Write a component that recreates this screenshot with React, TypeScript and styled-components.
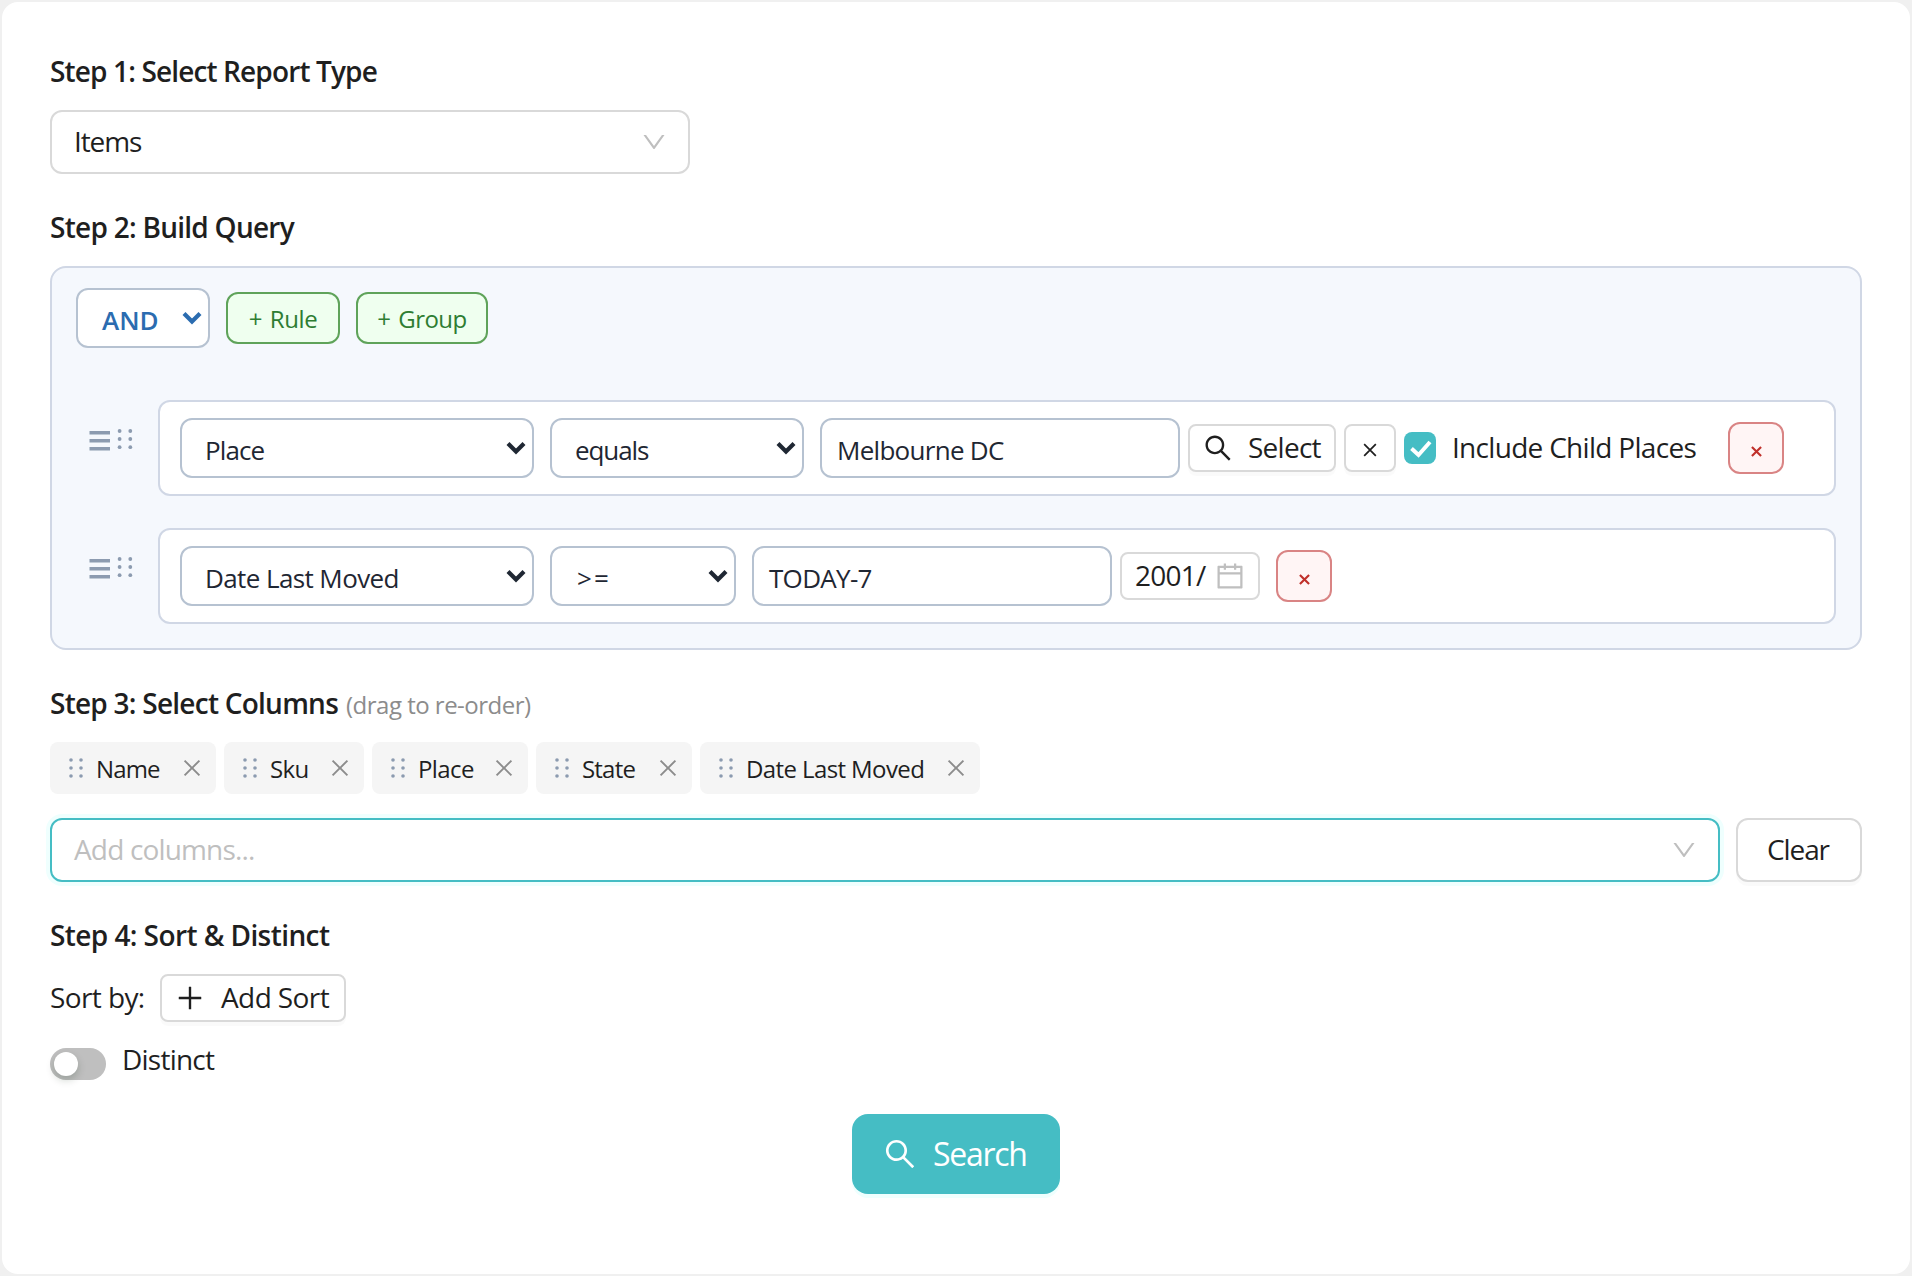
import React from 'react';
import styled, { createGlobalStyle, css } from 'styled-components';
import { AiOutlineCalendar, AiOutlineClose, AiOutlineDown, AiOutlinePlus, AiOutlineSearch } from 'react-icons/ai';

const GlobalStyle = createGlobalStyle`
  * { box-sizing: border-box; }
  body {
    margin: 0;
    background: #f0f0f0;
    color: #1f1f1f;
    font: 400 28px/44px 'Open Sans', 'Noto Sans', sans-serif;
  }
  svg { display: block; flex: none; }
`;

const Page = styled.div`
  height: 1276px;
  padding: 2px;
`;

const Card = styled.main`
  display: flex;
  flex-direction: column;
  gap: 32px;
  height: 1272px;
  padding: 48px;
  border-radius: 16px;
  background: #fff;
`;

const Step = styled.section`
  display: flex;
  flex-direction: column;
  gap: 16px;
`;

/* Text run with its own tracking; $nudge shifts the baseline. */
const Label = styled.span<{ $track?: number; $nudge?: number; $word?: number }>`
  display: block;
  white-space: pre;
  letter-spacing: ${(p) => p.$track ?? 0}px;
  word-spacing: ${(p) => p.$word ?? 0}px;
  margin-top: ${(p) => (p.$nudge ?? 0) * 2}px;
`;

const StepTitle = styled.h2<{ $track: number }>`
  display: flex;
  align-items: baseline;
  gap: 8px;
  height: 44px;
  margin: 0;
  font-size: 28px;
  line-height: 42px;
  font-weight: 600;
  white-space: pre;
  letter-spacing: ${(p) => p.$track}px;
`;

const Hint = styled.small`
  font-size: 24px;
  font-weight: 400;
  letter-spacing: -0.51px;
  color: #8c8c8c;
`;

const SelectBox = styled.div<{ $width?: number; $active?: boolean }>`
  display: flex;
  align-items: center;
  justify-content: space-between;
  height: 64px;
  width: ${(p) => (p.$width ? `${p.$width}px` : 'auto')};
  flex: ${(p) => (p.$width ? 'none' : '1')};
  padding: 0 20px 0 22px;
  border: 2px solid ${(p) => (p.$active ? '#45bdc4' : '#d9d9d9')};
  border-radius: 12px;
  background: #fff;
  ${(p) => p.$active && css`box-shadow: 0 0 0 4px #effffe;`}
  > svg { color: #bfbfbf; }
`;

const Placeholder = styled(Label)`
  color: #bfbfbf;
`;

const QueryPanel = styled.div`
  display: flex;
  flex-direction: column;
  height: 384px;
  padding: 20px 24px 24px;
  border: 2px solid #d0d7e5;
  border-radius: 16px;
  background: #f5f8fd;
`;

const GroupHeader = styled.div`
  display: flex;
  align-items: center;
  gap: 16px;
  height: 60px;
`;

const NativeSelect = styled.div<{ $width: number; $accent?: boolean; $indent?: number }>`
  display: flex;
  align-items: center;
  justify-content: space-between;
  width: ${(p) => p.$width}px;
  height: 60px;
  padding: 0 6px 0 ${(p) => p.$indent ?? 23}px;
  border: 2px solid #b6c2d1;
  border-radius: 12px;
  background: #fff;
  font-size: 26px;
  color: ${(p) => (p.$accent ? '#2b6cb0' : '#1f2733')};
  font-weight: ${(p) => (p.$accent ? 600 : 400)};
`;

const TextField = styled.div`
  display: flex;
  align-items: center;
  width: 360px;
  height: 60px;
  padding: 0 15px;
  border: 2px solid #b6c2d1;
  border-radius: 12px;
  background: #fff;
  font-size: 26px;
  color: #1f2733;
`;

const AddButton = styled.button<{ $width: number }>`
  display: flex;
  align-items: center;
  justify-content: center;
  width: ${(p) => p.$width}px;
  height: 52px;
  padding: 0;
  border: 2px solid #5fa35a;
  border-radius: 12px;
  background: #efffef;
  color: #2e7d32;
  font: 400 24px/44px 'Open Sans', sans-serif;
`;

const Rules = styled.div`
  display: flex;
  flex-direction: column;
  gap: 32px;
  margin-top: 52px;
`;

const RuleRow = styled.div`
  display: flex;
  gap: 24px;
  height: 96px;
`;

const Handle = styled.div`
  display: flex;
  align-items: flex-start;
  width: 58px;
  padding: 29px 0 0 13px;
  color: #8c9bb0;
`;

const RuleBody = styled.div`
  display: flex;
  align-items: center;
  flex: 1;
  padding: 0 20px;
  border: 2px solid #d0d7e5;
  border-radius: 12px;
  background: #fff;
`;

const Fields = styled.div`
  display: flex;
  align-items: center;
  gap: 16px;
`;

const Extras = styled.div`
  display: flex;
  align-items: center;
  gap: 8px;
  margin-left: 8px;
`;

const SmallButton = styled.button<{ $width: number; $gap?: number }>`
  display: flex;
  align-items: center;
  gap: ${(p) => p.$gap ?? 0}px;
  width: ${(p) => p.$width}px;
  height: 48px;
  padding: 0 0 0 12px;
  border: 2px solid #d9d9d9;
  border-radius: 8px;
  background: #fff;
  box-shadow: 0 4px 0 rgba(0, 0, 0, 0.02);
  color: #1f1f1f;
  font: inherit;
`;

const ClearPlace = styled(SmallButton)`
  justify-content: center;
  padding: 3px 0 0;
`;

const CheckLabel = styled.label`
  display: flex;
  align-items: center;
  gap: 16px;
`;

const CheckMark = styled.span`
  display: flex;
  align-items: center;
  justify-content: center;
  width: 32px;
  height: 32px;
  padding: 2px 0 0 1px;
  border-radius: 8px;
  background: #45bdc4;
`;

const RemoveButton = styled.button<{ $offset: number }>`
  display: flex;
  align-items: center;
  justify-content: center;
  width: 56px;
  height: 52px;
  margin-left: ${(p) => p.$offset}px;
  padding: 6px 0 0 1px;
  border: 2px solid #d98484;
  border-radius: 12px;
  background: #fff5f5;
  color: #c0302a;
`;

const DateField = styled.div`
  display: flex;
  align-items: center;
  justify-content: space-between;
  width: 140px;
  height: 48px;
  padding: 0 12px 0 13px;
  border: 2px solid #d9d9d9;
  border-radius: 8px;
  > svg { color: #bfbfbf; }
`;

const Tags = styled.div`
  display: flex;
  gap: 8px;
`;

const Tag = styled.div<{ $width: number }>`
  display: flex;
  align-items: center;
  justify-content: space-between;
  width: ${(p) => p.$width}px;
  height: 52px;
  padding: 0 12px 0 19px;
  border-radius: 8px;
  background: #f5f5f5;
  font-size: 24px;
  > svg { color: #8c8c8c; margin-bottom: 1px; }
`;

const TagName = styled.div`
  display: flex;
  align-items: center;
  gap: 11px;
  > svg { color: #8c9bb0; }
`;

const ColumnPicker = styled.div`
  display: flex;
  gap: 16px;
  margin-top: 8px;
`;

const ClearButton = styled.button`
  display: flex;
  align-items: center;
  justify-content: center;
  width: 126px;
  height: 64px;
  padding: 0 2px 0 0;
  border: 2px solid #d9d9d9;
  border-radius: 12px;
  background: #fff;
  box-shadow: 0 4px 0 rgba(0, 0, 0, 0.02);
  color: #1f1f1f;
  font: inherit;
`;

const SortRow = styled.div`
  display: flex;
  align-items: center;
  height: 48px;
  > span { width: 110px; }
`;

const DistinctRow = styled.div`
  display: flex;
  align-items: flex-start;
  gap: 16px;
  height: 44px;
`;

const Switch = styled.span`
  width: 56px;
  height: 32px;
  margin-top: 10px;
  padding: 4px;
  border-radius: 16px;
  background: #bfbfbf;
  &::before {
    content: '';
    display: block;
    width: 24px;
    height: 24px;
    border-radius: 50%;
    background: #fff;
    box-shadow: 0 4px 8px rgba(0, 35, 11, 0.2);
  }
`;

const SearchButton = styled.button`
  display: flex;
  align-items: center;
  align-self: center;
  gap: 15px;
  width: 208px;
  height: 80px;
  padding: 0 0 0 30px;
  border: 0;
  border-radius: 16px;
  background: #45bdc4;
  box-shadow: 0 4px 0 #effffe;
  color: #fff;
  font: 400 32px/44px 'Open Sans', sans-serif;
`;

const Chevron = () => (
  <svg width="20" height="14" viewBox="0 0 20 14" fill="none" stroke="currentColor" strokeWidth="4.2">
    <path d="M2 2.5 10 10.5 18 2.5" />
  </svg>
);

const Cross = ({ size, weight }: { size: number; weight: number }) => (
  <svg width={size} height={size} viewBox="0 0 12 12" stroke="currentColor" strokeWidth={weight}>
    <path d="M1 1 11 11M11 1 1 11" />
  </svg>
);

const Dots = () => (
  <svg width="16" height="22" viewBox="0 0 16 22" fill="currentColor">
    {[3, 11, 19].map((y) => [2, 12].map((x) => <circle key={`${x}-${y}`} cx={x} cy={y} r="1.8" />))}
  </svg>
);

const RuleHandle = () => (
  <Handle>
    <svg width="46" height="24" viewBox="0 0 46 24" fill="currentColor">
      <path d="M0.5 2h20.5v3.6H0.5zM0.5 10h20.5v3.6H0.5zM0.5 18h20.5v3.6H0.5z" />
      {[2, 10, 18.2].map((y) => [30.6, 41.3].map((x) => <circle key={`${x}-${y}`} cx={x} cy={y} r="1.9" />))}
    </svg>
  </Handle>
);

const columns = [
  { name: 'Name', width: 166, track: -0.88 },
  { name: 'Sku', width: 140, track: -0.6 },
  { name: 'Place', width: 156, track: -0.58 },
  { name: 'State', width: 156, track: -0.8 },
  { name: 'Date Last Moved', width: 280, track: -0.6 },
];

export default function App() {
  return (
    <Page>
      <GlobalStyle />
      <Card>
        <Step>
          <StepTitle $track={-0.86}>Step 1: Select Report Type</StepTitle>
          <SelectBox $width={640}>
            <Label $track={-1.1} $nudge={-1}>Items</Label>
            <AiOutlineDown size={28} />
          </SelectBox>
        </Step>

        <Step>
          <StepTitle $track={-0.73}>Step 2: Build Query</StepTitle>
          <QueryPanel>
            <GroupHeader>
              <NativeSelect $width={134} $indent={24} $accent>
                <Label $nudge={2}>AND</Label>
                <Chevron />
              </NativeSelect>
              <AddButton $width={114}><Label $track={-0.4} $word={2} $nudge={1}>+ Rule</Label></AddButton>
              <AddButton $width={132}><Label $track={-0.5} $word={2} $nudge={1}>+ Group</Label></AddButton>
            </GroupHeader>
            <Rules>
              <RuleRow>
                <RuleHandle />
                <RuleBody>
                  <Fields>
                    <NativeSelect $width={354}><Label $track={-0.9} $nudge={2}>Place</Label><Chevron /></NativeSelect>
                    <NativeSelect $width={254}><Label $track={-1.1} $nudge={2}>equals</Label><Chevron /></NativeSelect>
                    <TextField><Label $track={-0.71} $nudge={2}>Melbourne DC</Label></TextField>
                  </Fields>
                  <Extras>
                    <SmallButton $width={148} $gap={14}>
                      <AiOutlineSearch size={32} />
                      <Label $track={-0.74} $nudge={-1}>Select</Label>
                    </SmallButton>
                    <ClearPlace $width={52}><Cross size={14} weight={1.5} /></ClearPlace>
                    <CheckLabel>
                      <CheckMark>
                        <svg width="22" height="18" viewBox="0 0 22 18" fill="none" stroke="#fff" strokeWidth="4">
                          <path d="M1.5 8.5 8.5 15 20 2" />
                        </svg>
                      </CheckMark>
                      <Label $track={-0.7} $nudge={-1}>Include Child Places</Label>
                    </CheckLabel>
                  </Extras>
                  <RemoveButton $offset={31.5}><Cross size={11} weight={2.3} /></RemoveButton>
                </RuleBody>
              </RuleRow>
              <RuleRow>
                <RuleHandle />
                <RuleBody>
                  <Fields>
                    <NativeSelect $width={354}><Label $track={-0.6} $nudge={2}>Date Last Moved</Label><Chevron /></NativeSelect>
                    <NativeSelect $width={186} $indent={25}><Label $track={2.1} $nudge={2}>&gt;=</Label><Chevron /></NativeSelect>
                    <TextField><Label $track={-0.7} $nudge={2}>TODAY-7</Label></TextField>
                  </Fields>
                  <Extras>
                    <DateField>
                      <Label $track={-0.76} $nudge={-1}>2001/</Label>
                      <AiOutlineCalendar size={32} />
                    </DateField>
                  </Extras>
                  <RemoveButton $offset={16}><Cross size={11} weight={2.3} /></RemoveButton>
                </RuleBody>
              </RuleRow>
            </Rules>
          </QueryPanel>
        </Step>

        <Step>
          <StepTitle $track={-0.75}>
            Step 3: Select Columns<Hint>(drag to re-order)</Hint>
          </StepTitle>
          <Tags>
            {columns.map((c) => (
              <Tag key={c.name} $width={c.width}>
                <TagName>
                  <Dots />
                  <Label $track={c.track} $nudge={1}>{c.name}</Label>
                </TagName>
                <AiOutlineClose size={24} />
              </Tag>
            ))}
          </Tags>
          <ColumnPicker>
            <SelectBox $active>
              <Placeholder $track={-0.84} $nudge={-1}>Add columns...</Placeholder>
              <AiOutlineDown size={28} />
            </SelectBox>
            <ClearButton><Label $track={-1.1} $nudge={-1}>Clear</Label></ClearButton>
          </ColumnPicker>
        </Step>

        <Step>
          <StepTitle $track={-0.58}>Step 4: Sort &amp; Distinct</StepTitle>
          <SortRow>
            <Label $track={-0.6} $nudge={-1}>Sort by:</Label>
            <SmallButton $width={186} $gap={15}>
              <AiOutlinePlus size={32} />
              <Label $track={-0.6} $nudge={-1}>Add Sort</Label>
            </SmallButton>
          </SortRow>
          <DistinctRow>
            <Switch />
            <Label $track={-0.77} $nudge={-0.5}>Distinct</Label>
          </DistinctRow>
        </Step>

        <SearchButton>
          <AiOutlineSearch size={36} />
          <Label $track={-1.3}>Search</Label>
        </SearchButton>
      </Card>
    </Page>
  );
}
